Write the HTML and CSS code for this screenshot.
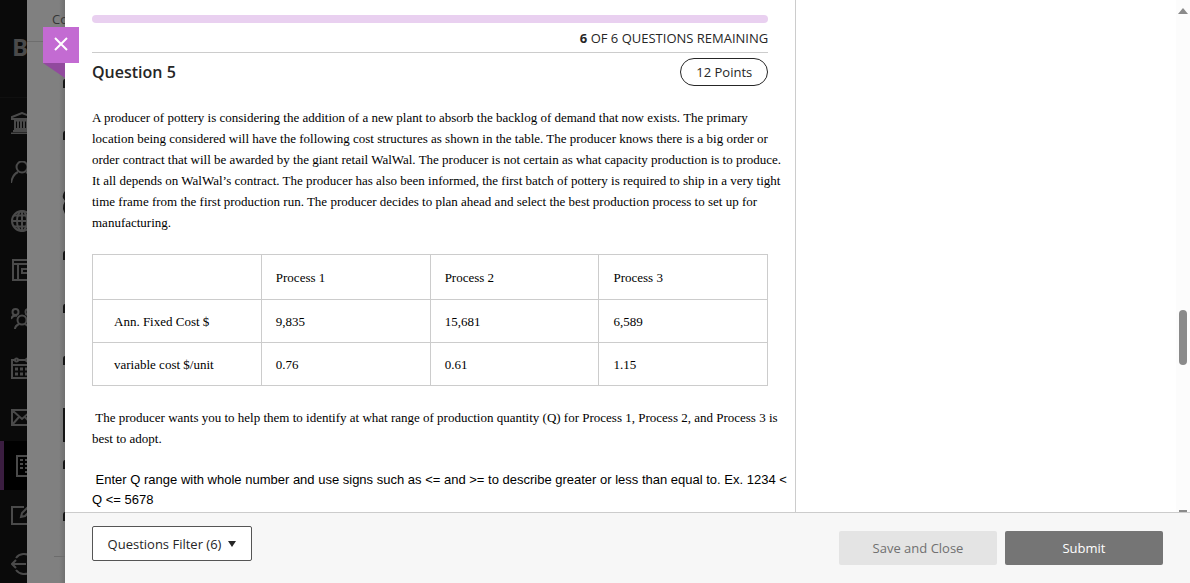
FILE: index.html
```
<!DOCTYPE html>
<html lang="en">
<head>
  <meta charset="UTF-8">
  <meta name="viewport" content="width=device-width, initial-scale=1">
  <title>Question 5</title>
  <link rel="stylesheet" href="styles.css">
</head>
<body>
  <nav class="rail" aria-label="Main">
    <div class="logo">B</div>
    <a class="rail-item" href="#" aria-label="Institution">
      <svg viewBox="0 0 22 22"><path d="M1 7V5l10-4 10 4v2zM2 19h18M0 21.500h22M4 9v8M7 9v8M10 9v8M13 9v8M16 9v8M3 8.500h16M3 17h16"/></svg>
    </a>
    <a class="rail-item" href="#" aria-label="Profile">
      <svg viewBox="0 0 22 22"><circle cx="11" cy="6" r="5.500"/><path d="M0 22c1-6 3-9 7-11M22 22c-1-6-3-9-7-11"/></svg>
    </a>
    <a class="rail-item" href="#" aria-label="Activity">
      <svg viewBox="0 0 22 22"><circle cx="11" cy="11" r="10"/><ellipse cx="11" cy="11" rx="5" ry="10"/><path d="M11 1v20M1 11h20M3 5.500h16M3 16.500h16"/></svg>
    </a>
    <a class="rail-item" href="#" aria-label="Courses">
      <svg viewBox="0 0 22 22"><path d="M2 1h19v20H2zM2 5h19M7 5v16M11 10h7v4h-7z"/></svg>
    </a>
    <a class="rail-item" href="#" aria-label="Organizations">
      <svg viewBox="0 0 22 22"><circle cx="4.500" cy="4" r="3"/><circle cx="17.500" cy="4" r="3"/><circle cx="11" cy="12" r="4.500"/><path d="M0 11c1-3 3-4 6-3M22 11c-1-3-3-4-6-3M4 21c0-3 2-4 4-5M18 21c0-3-2-4-4-5"/></svg>
    </a>
    <a class="rail-item" href="#" aria-label="Calendar">
      <svg viewBox="0 0 22 22"><path d="M4 3H1v18h20V3h-3M7 3h8M1 8h20"/><circle cx="5.500" cy="3" r="1.500"/><circle cx="16.500" cy="3" r="1.500"/><path class="dots" d="M4 12h3M9 12h3M14 12h3M4 17h3M9 17h3M14 17h3"/></svg>
    </a>
    <a class="rail-item" href="#" aria-label="Messages">
      <svg viewBox="0 0 22 22"><path d="M1 4h20v15H1zM1 4l10 9 10-9M1 19l7-8M21 19l-7-8"/></svg>
    </a>
    <a class="rail-item active" href="#" aria-label="Grades">
      <svg viewBox="0 0 22 22"><path d="M2 1h18v20H2zM5 5h3M10 5h7M5 9h3M10 9h7M5 13h3M10 13h7M10 17h7"/></svg>
    </a>
    <a class="rail-item" href="#" aria-label="Tools">
      <svg viewBox="0 0 22 22"><path d="M13 3H1v17h19v-8M10 13l1-4 8-8 3 3-8 8z"/></svg>
    </a>
    <a class="rail-item" href="#" aria-label="Sign out">
      <svg viewBox="0 0 22 22"><path d="M5 5a10 10 0 1 1 0 12M1 11h14M5 7l-4 4 4 4"/></svg>
    </a>
  </nav>

  <!-- dimmed course page under the panel -->
  <div class="underlay">
    <div class="underlay-head">Co</div>
    <svg class="underlay-edge" viewBox="0 0 11 541" aria-hidden="true">
      <g fill="#151515">
        <path d="M11 37q-2 0-2 3v6h2zM11 89q-2 0-2 3v6h2zM11 149q-3 3-2 7l2 3zM11 159q-2 3-2 8l2 5zM11 209q-2 0-2 3v6h2zM11 262q-2 0-2 3v6h2zM11 314q-2 0-2 3v6h2zM9 366h2v34H9zM11 418q-2 0-2 3v6h2zM11 470q-2 0-2 3v6h2z"/>
      </g>
      <path d="M0 514.500h11" stroke="#6c6c6c"/>
    </svg>
  </div>

  <section class="panel">
    <button class="close" type="button" aria-label="Close">
      <svg viewBox="0 0 14 14"><path d="M1 1l12 12M13 1L1 13"/></svg>
    </button>

    <div class="viewport">
      <main class="assessment">
        <div class="progress"></div>
        <p class="remaining"><b>6</b> OF 6 QUESTIONS REMAINING</p>
        <header class="question-head">
          <h1>Question 5</h1>
          <span class="points">12 Points</span>
        </header>

        <p class="prose">A producer of pottery is considering the addition of a new plant to absorb the backlog of demand that now exists. The primary<br>
          location being considered will have the following cost structures as shown in the table. The producer knows there is a big order or<br>
          order contract that will be awarded by the giant retail WalWal. The producer is not certain as what capacity production is to produce.<br>
          It all depends on WalWal’s contract. The producer has also been informed, the first batch of pottery is required to ship in a very tight<br>
          time frame from the first production run. The producer decides to plan ahead and select the best production process to set up for<br>
          manufacturing.</p>

        <table class="costs">
          <thead>
            <tr><td></td><th scope="col">Process 1</th><th scope="col">Process 2</th><th scope="col">Process 3</th></tr>
          </thead>
          <tbody>
            <tr><th scope="row">Ann. Fixed Cost $</th><td>9,835</td><td>15,681</td><td>6,589</td></tr>
            <tr><th scope="row">variable cost $/unit</th><td>0.76</td><td>0.61</td><td>1.15</td></tr>
          </tbody>
        </table>

        <p class="prose">&nbsp;The producer wants you to help them to identify at what range of production quantity (Q) for Process 1, Process 2, and Process 3 is<br>
          best to adopt.</p>
        <p class="hint">&nbsp;Enter Q range with whole number and use signs such as &lt;= and &gt;= to describe greater or less than equal to. Ex. 1234 &lt;<br>
          Q &lt;= 5678</p>
      </main>
      <aside class="side"></aside>
      <div class="scrollbar">
        <svg width="10" height="6" viewBox="0 0 10 6"><path d="M5 0l5 6H0z" fill="#8a8a8a"/></svg>
        <div class="thumb"></div>
        <div class="arrow-down"></div>
      </div>
    </div>

    <footer class="footer">
      <button class="btn filter" type="button">Questions Filter (6)
        <svg width="8" height="6" viewBox="0 0 8 6"><path d="M0 0h8L4 6z" fill="#262626"/></svg>
      </button>
      <div class="actions">
        <button class="btn save" type="button">Save and Close</button>
        <button class="btn submit" type="button">Submit</button>
      </div>
    </footer>
  </section>
</body>
</html>
```
FILE: styles.css
```
* { box-sizing: border-box; }
body { display: flex; height: 100vh; margin: 0; overflow: hidden; background: #fff; color: #262626; font-family: "Open Sans", "Noto Sans", sans-serif; font-size: 13px; }
button { font: inherit; cursor: pointer; }

/* left navigation */
.rail { flex: 0 0 27px; overflow: hidden; background: #0a0a0a; }
.logo { height: 98px; padding: 32px 0 0 12px; border-bottom: 1px solid #101010; color: #4a4a4a; font-size: 24px; font-weight: 700; line-height: 30px; }
.rail-item { display: flex; align-items: center; height: 49px; padding-left: 11px; }
.rail-item svg { flex: none; width: 22px; height: 22px; fill: none; stroke: #4a4a4a; stroke-width: 2; }
.rail-item .dots { stroke-width: 3; }
.rail-item.active { border-left: 4px solid #3a1d40; background: #000; }

.underlay { display: flex; flex-direction: column; flex: 0 0 38px; overflow: hidden; background: linear-gradient(to left, #707070, #808080 6px); }
.underlay-head { flex: none; height: 42px; padding: 9px 0 0 25px; border-bottom: 1px solid #6e6e6e; color: #363636; font-size: 13px; line-height: 20px; }
.underlay-edge { flex: none; align-self: flex-end; width: 11px; height: 541px; }

/* assessment panel */
.panel { position: relative; display: flex; flex: 1; flex-direction: column; min-width: 0; background: #fff; }
.close { position: absolute; top: 27px; left: -22px; width: 36px; height: 36px; padding: 0; border: 0; background: #c36bd2; }
.close svg { width: 14px; height: 14px; margin-top: 2px; fill: none; stroke: #fff; stroke-width: 2; }
.close::after { content: ""; position: absolute; top: 36px; left: 0; width: 22px; height: 15px; background: #914a9d; clip-path: polygon(0 0, 100% 0, 100% 100%); }

.viewport { display: flex; flex: 1; min-height: 0; overflow: hidden; }
.assessment { flex: 0 0 65%; min-width: 0; padding: 15px 27px 0; border-right: 1px solid #ccc; }
.side { flex: 1; }
.progress { height: 8px; border-radius: 4px; background: #e9d0f0; }
.remaining { margin: 0; padding: 5px 0 4px; border-bottom: 1px solid #ccc; line-height: 20px; text-align: right; }
.question-head { display: flex; align-items: center; justify-content: space-between; height: 38px; }
.question-head h1 { margin: 0; font-size: 16px; font-weight: 600; }
.points { padding: 3px 15px; border: 1px solid #262626; border-radius: 14px; font-weight: 500; line-height: 20px; }
.prose { margin: 16px 0 21px; color: #000; font-family: "Liberation Serif", serif; font-size: 13px; line-height: 21px; white-space: nowrap; }
.hint { margin: 21px 0; color: #000; font-family: "Liberation Sans", sans-serif; font-size: 13px; line-height: 20px; white-space: nowrap; }

.costs { width: 100%; margin-bottom: 21px; border-collapse: collapse; table-layout: fixed; color: #000; font-family: "Liberation Serif", serif; font-size: 13px; line-height: 21px; }
.costs th, .costs td { height: 43px; padding: 0 14px; border: 1px solid #ccc; font-weight: 400; text-align: left; }
.costs thead th { height: 45px; }
.costs tbody th { padding-left: 21px; }

.scrollbar { display: flex; flex: 0 0 14px; flex-direction: column; align-items: center; justify-content: space-between; padding-top: 8px; background: #fcfcfc; }
.thumb { width: 8px; height: 55px; margin-top: 150px; border-radius: 4px; background: #8a8a8a; }
.arrow-down { width: 8px; height: 2px; background: #8a8a8a; }

.footer { display: flex; flex: 0 0 71px; align-items: flex-start; justify-content: space-between; padding: 13px 27px; border-top: 1px solid #ccc; background: #f7f7f7; }
.btn { height: 35px; border: 0; border-radius: 2px; font-weight: 500; }
.filter { display: flex; align-items: center; justify-content: center; gap: 7px; width: 160px; padding: 0; border: 1px solid #555; background: #fff; color: #262626; }
.actions { display: flex; gap: 8px; padding-top: 5px; }
.save, .submit { width: 158px; height: 34px; }
.save { background: #e4e4e4; color: #707070; }
.submit { background: #757575; color: #fff; }
```
